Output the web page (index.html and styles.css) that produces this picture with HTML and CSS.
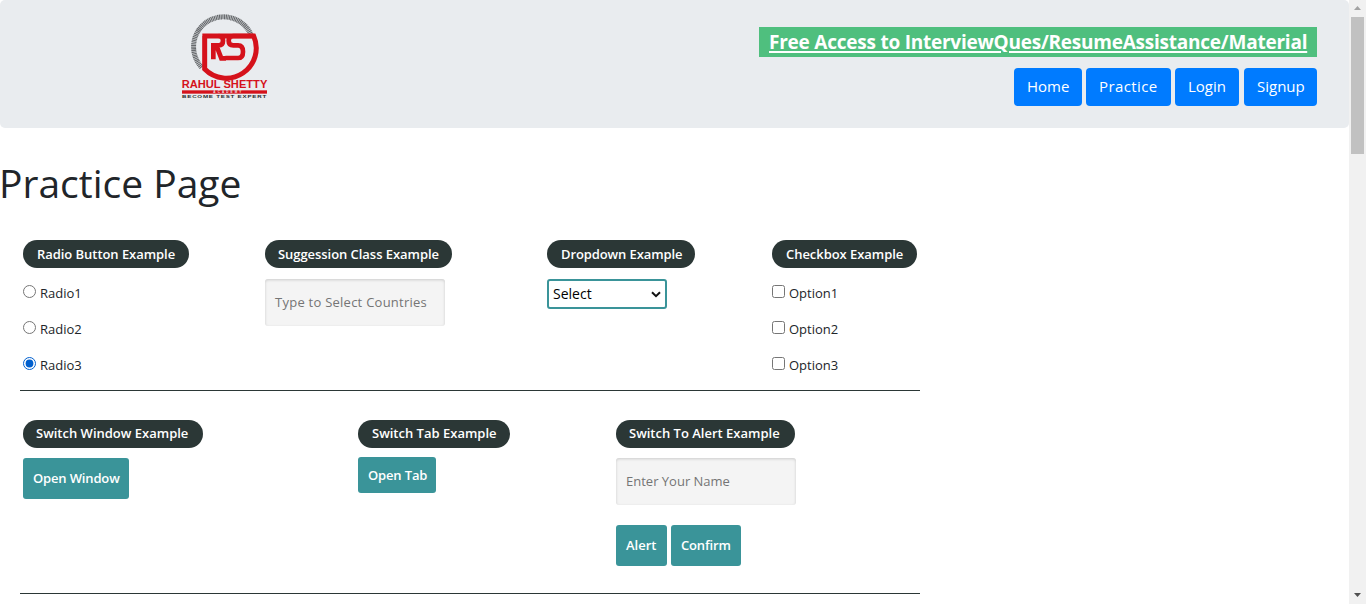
FILE: index.html
```html
<!DOCTYPE html>
<html lang="en">
<head>
<meta charset="utf-8">
<title>Practice Page</title>
<link rel="stylesheet" href="styles.css">
</head>
<body>
<div class="page">
  <header class="header">
    <svg class="logo" viewBox="0 0 330 300" role="img" aria-label="Rahul Shetty Academy">
      <path class="ring-grey" d="M95 187A90 90 0 1 1 243 89"/>
      <path class="ring-red" d="M104 93V192A90 90 0 0 0 251 93H97"/>
      <path class="letters" d="M130 163V121H146Q159 121 159 107Q159 93 146 93M139 121L154 160H168M250 93H190Q176 93 176 107Q176 121 190 121H204Q219 121 219 140Q219 159 204 159H166"/>
      <text class="logo-name" x="35" y="250" textLength="257" lengthAdjust="spacingAndGlyphs">RAHUL SHETTY</text>
      <rect class="logo-bar" x="36" y="256" width="255" height="10"/>
      <text class="logo-academy" x="130" y="264" textLength="84">ACADEMY</text>
      <text class="logo-tag" x="36" y="279" textLength="255" lengthAdjust="spacingAndGlyphs">BECOME TEST EXPERT</text>
    </svg>
    <div class="header-side">
      <a class="banner">Free Access to InterviewQues/ResumeAssistance/Material</a>
      <nav class="nav">
        <a class="nav-btn home">Home</a>
        <a class="nav-btn practice">Practice</a>
        <a class="nav-btn login">Login</a>
        <a class="nav-btn signup">Signup</a>
      </nav>
    </div>
  </header>
  <h1 class="title">Practice Page</h1>
  <section class="row row-one">
    <div>
      <h2 class="pill radio-pill">Radio Button Example</h2>
      <label class="choice"><input type="radio" name="r"><span>Radio1</span></label>
      <label class="choice"><input type="radio" name="r"><span>Radio2</span></label>
      <label class="choice"><input type="radio" name="r" checked><span>Radio3</span></label>
    </div>
    <div>
      <h2 class="pill suggest-pill">Suggession Class Example</h2>
      <div class="field country-field">Type to Select Countries</div>
    </div>
    <div>
      <h2 class="pill drop-pill">Dropdown Example</h2>
      <div class="select"><span>Select</span><svg class="chevron" viewBox="0 0 10 7"><path d="M1 1.2L5 5.2L9 1.2"/></svg></div>
    </div>
    <div>
      <h2 class="pill check-pill">Checkbox Example</h2>
      <label class="choice"><input type="checkbox"><span>Option1</span></label>
      <label class="choice"><input type="checkbox"><span>Option2</span></label>
      <label class="choice"><input type="checkbox"><span>Option3</span></label>
    </div>
  </section>
  <section class="row row-two">
    <div>
      <h2 class="pill window-pill">Switch Window Example</h2>
      <button class="btn open-window">Open Window</button>
    </div>
    <div>
      <h2 class="pill tab-pill">Switch Tab Example</h2>
      <a class="btn open-tab">Open Tab</a>
    </div>
    <div>
      <h2 class="pill alert-pill">Switch To Alert Example</h2>
      <div class="field name-field">Enter Your Name</div>
      <div class="actions"><button class="btn alert">Alert</button><button class="btn confirm">Confirm</button></div>
    </div>
  </section>
</div>
<div class="scrollbar">
  <svg class="arrow arrow-up" viewBox="0 0 17 17"><path d="M5 10L8.500 6L12 10Z"/></svg>
  <div class="thumb"></div>
  <svg class="arrow" viewBox="0 0 17 17"><path d="M5 6L8.500 10L12 6Z"/></svg>
</div>
</body>
</html>
```
FILE: styles.css
```css
* { box-sizing: border-box; }
body { margin: 0; display: flex; height: 604px; overflow: hidden; background: #fff; color: #212529; font-family: "Trebuchet MS", "Open Sans", sans-serif; font-size: 13px; line-height: 20px; }
.page { width: 1349px; height: 604px; overflow: hidden; }
.header { height: 128px; display: flex; justify-content: space-between; padding: 5px 32px 0 170px; background: #e9ecef; border-radius: 5px; }
.logo { width: 110px; height: 100px; }
.ring-grey { fill: none; stroke: #66696c; stroke-width: 15; stroke-dasharray: 3.500 1.500; }
.ring-red { fill: none; stroke: #d5121b; stroke-width: 15; }
.letters { fill: none; stroke: #d5121b; stroke-width: 14; }
.logo-name { font: 700 32px "Liberation Sans", sans-serif; fill: #d5121b; }
.logo-bar { fill: #d5121b; }
.logo-academy { font: 700 9px "Liberation Sans", sans-serif; fill: #e9ecef; }
.logo-tag { font: 700 12px "Liberation Sans", sans-serif; letter-spacing: 1.5px; fill: #2a2a2a; }
.header-side { display: flex; flex-direction: column; align-items: flex-end; padding-top: 22px; }
.banner { width: 558px; height: 30px; padding: 0 10px; line-height: 30px; background: #4fbf7e; color: #fff; font-size: 19px; font-weight: 700; letter-spacing: -.23px; text-decoration: underline; text-decoration-thickness: 2px; text-underline-offset: 2px; white-space: nowrap; }
.nav { display: flex; gap: 4px; margin-top: 11px; }
.nav-btn { height: 38px; padding-left: 13px; line-height: 37px; border-radius: 4px; background: #007bff; color: #fff; font-size: 15px; font-weight: 500; }
.home { width: 68px; }
.practice { width: 85px; letter-spacing: .4px; }
.login { width: 64px; }
.signup { width: 73px; margin-left: 1px; }
.title { margin: 31px 0 0; height: 48px; line-height: 48px; font-size: 39px; font-weight: 400; text-indent: -1px; }
.row { display: grid; width: 900px; margin-left: 20px; padding-left: 3px; border-bottom: 1px solid #2b3736; }
.row-one { grid-template-columns: 242px 282px 225px 1fr; margin-top: 33px; height: 151px; }
.row-two { grid-template-columns: 335px 258px 1fr; padding-top: 29px; height: 203px; }
.pill { margin: 0; height: 28px; padding-left: 14px; line-height: 28px; border-radius: 14px; background: #2b3736; color: #fff; font-size: 13px; font-weight: 600; letter-spacing: -.05px; white-space: nowrap; }
.radio-pill { width: 166px; }
.suggest-pill { width: 187px; padding-left: 13px; }
.drop-pill { width: 148px; letter-spacing: -.1px; }
.check-pill { width: 145px; }
.window-pill { width: 180px; line-height: 27px; letter-spacing: 0; padding-left: 13px; }
.tab-pill { width: 152px; line-height: 27px; letter-spacing: 0; }
.alert-pill { width: 179px; line-height: 27px; letter-spacing: 0; padding-left: 13px; }
.choice { display: flex; height: 36px; padding-top: 15px; }
.choice input { width: 13px; height: 13px; margin: 2px 4px 0 0; flex: none; accent-color: #005fce; }
.field { width: 180px; height: 47px; margin-top: 11px; padding-left: 10px; line-height: 46px; border-radius: 3px; background: #f4f4f4; color: #757575; box-shadow: inset 0 1px 3px rgba(0,0,0,.17); white-space: nowrap; }
.country-field { letter-spacing: .25px; }
.name-field { margin-top: 10px; }
.select { display: flex; justify-content: space-between; align-items: center; width: 120px; height: 30px; margin-top: 11px; padding: 0 4px; border: 2px solid #3a9499; border-radius: 3px; color: #000; font-size: 14px; }
.chevron { width: 10px; height: 7px; fill: none; stroke: #111; stroke-width: 2; }
.btn { display: block; height: 41px; margin: 0; padding: 0 0 1px 10px; border: 0; border-radius: 3px; background: #3a9499; color: #fff; font: 600 13px/40px "Trebuchet MS", "Open Sans", sans-serif; letter-spacing: -.15px; text-align: left; white-space: nowrap; }
.open-window { width: 106px; margin-top: 10px; line-height: 39px; }
.open-tab { width: 78px; height: 36px; margin-top: 9px; line-height: 36px; }
.actions { display: flex; gap: 4px; margin-top: 20px; }
.actions .btn { line-height: 39px; }
.alert { width: 51px; letter-spacing: 0; }
.confirm { width: 70px; }
.scrollbar { display: flex; flex-direction: column; width: 17px; background: #f1f1f1; }
.arrow { width: 17px; height: 17px; fill: #505050; }
.arrow-up { fill: #a3a3a3; }
.thumb { width: 13px; height: 137px; margin: 0 2px auto; background: #c1c1c1; }
```
